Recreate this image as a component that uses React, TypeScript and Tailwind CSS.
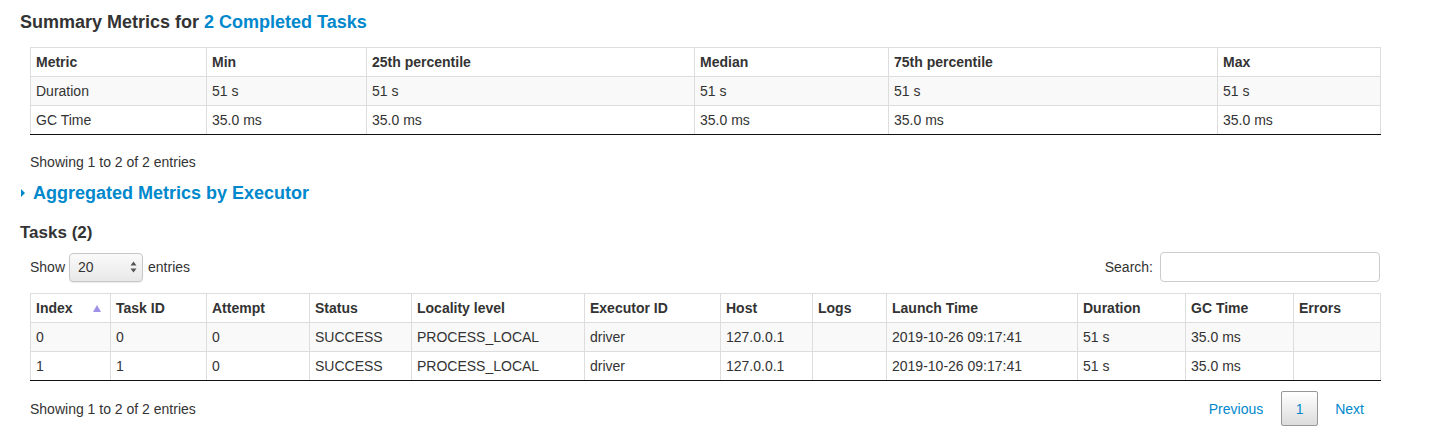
import React from 'react';

const summaryCols = [176, 160, 328, 194, 329, 163];
const summaryHead = ['Metric', 'Min', '25th percentile', 'Median', '75th percentile', 'Max'];
const summaryRows = [
  ['Duration', '51 s', '51 s', '51 s', '51 s', '51 s'],
  ['GC Time', '35.0 ms', '35.0 ms', '35.0 ms', '35.0 ms', '35.0 ms'],
];

const taskCols = [80, 96, 103, 102, 173, 136, 92, 74, 191, 108, 108, 87];
const taskHead = [
  'Index',
  'Task ID',
  'Attempt',
  'Status',
  'Locality level',
  'Executor ID',
  'Host',
  'Logs',
  'Launch Time',
  'Duration',
  'GC Time',
  'Errors',
];
const taskRows = [
  ['0', '0', '0', 'SUCCESS', 'PROCESS_LOCAL', 'driver', '127.0.0.1', '', '2019-10-26 09:17:41', '51 s', '35.0 ms', ''],
  ['1', '1', '0', 'SUCCESS', 'PROCESS_LOCAL', 'driver', '127.0.0.1', '', '2019-10-26 09:17:41', '51 s', '35.0 ms', ''],
];

function DataTable({ cols, head, rows, sortFirst }: { cols: number[]; head: string[]; rows: string[][]; sortFirst?: boolean }) {
  return (
    <table className="w-[1350px] table-fixed border-collapse text-[14px] leading-[20px] text-[#333]">
      <colgroup>
        {cols.map((w, i) => (
          <col key={i} style={{ width: w }} />
        ))}
      </colgroup>
      <thead>
        <tr className="bg-white">
          {head.map((h, i) => (
            <th key={h} className="relative border border-[#ddd] px-[5px] py-[4px] text-left font-bold">
              {h}
              {sortFirst && i === 0 && (
                <svg className="absolute right-[9px] top-[11px]" width="8" height="7" viewBox="0 0 8 7">
                  <path d="M4 0L8 7H0Z" fill="#9e92e6" />
                </svg>
              )}
            </th>
          ))}
        </tr>
      </thead>
      <tbody>
        {rows.map((r, ri) => (
          <tr key={ri} className={ri % 2 === 0 ? 'bg-[#f9f9f9]' : 'bg-white'}>
            {r.map((c, ci) => (
              <td
                key={ci}
                className={`border border-[#ddd] px-[5px] py-[4px] ${ri === rows.length - 1 ? 'border-b-[#111]' : ''}`}
              >
                {c}
              </td>
            ))}
          </tr>
        ))}
      </tbody>
    </table>
  );
}

export default function App() {
  return (
    <div className="min-h-[441px] w-[1429px] bg-white pl-[20px] font-['Liberation_Sans',Helvetica,Arial,sans-serif] text-[#333]">
      <h4 className="pt-[12px] text-[18px] font-bold leading-[20px]">
        Summary Metrics for <a className="text-[#0088cc]">2 Completed Tasks</a>
      </h4>
      <div className="ml-[10px] mt-[15px]">
        <DataTable cols={summaryCols} head={summaryHead} rows={summaryRows} />
        <div className="mt-[17px] text-[14px] leading-[20px]">Showing 1 to 2 of 2 entries</div>
      </div>

      <div className="mt-[11px] flex items-center text-[18px] font-bold leading-[20px] text-[#0088cc]">
        <svg className="ml-[1px] mr-[8px]" width="4" height="8" viewBox="0 0 4 8">
          <path d="M0 0L4 4L0 8Z" fill="#0088cc" />
        </svg>
        <span>Aggregated Metrics by Executor</span>
      </div>

      <h4 className="mt-[20px] text-[17px] font-bold leading-[20px]">Tasks (2)</h4>

      <div className="ml-[10px]">
        <div className="mt-[9px] flex w-[1350px] items-center justify-between text-[14px]">
          <div className="flex items-center">
            <span>Show</span>
            <div className="ml-[4px] mr-[5px] flex h-[29px] w-[74px] items-center justify-between rounded-[4px] border border-[#c8c8c8] bg-gradient-to-b from-[#fafafa] to-[#e8e8e8] pl-[8px] pr-[5px] shadow-[0_1px_1px_rgba(0,0,0,0.08)]">
              <span>20</span>
              <svg width="7" height="12" viewBox="0 0 7 12">
                <path d="M3.5 0.5L6.5 4.5H0.5Z" fill="#555" />
                <path d="M3.5 11.5L6.5 7.5H0.5Z" fill="#555" />
              </svg>
            </div>
            <span>entries</span>
          </div>
          <div className="flex items-center">
            <span className="mr-[7px]">Search:</span>
            <div className="h-[30px] w-[220px] rounded-[4px] border border-[#ccc] bg-white" />
          </div>
        </div>

        <div className="mt-[11px]">
          <DataTable cols={taskCols} head={taskHead} rows={taskRows} sortFirst />
        </div>

        <div className="mt-[10px] flex w-[1350px] items-center justify-between text-[14px] leading-[20px]">
          <span>Showing 1 to 2 of 2 entries</span>
          <div className="flex items-center">
            <span className="pl-[14px] pr-[18px] text-[#0088cc]">Previous</span>
            <span className="flex h-[35px] w-[37px] items-center justify-center rounded-[2px] border border-[#979797] bg-gradient-to-b from-[#fff] to-[#dcdcdc] text-[#0088cc]">
              1
            </span>
            <span className="pl-[17px] pr-[16px] text-[#0088cc]">Next</span>
          </div>
        </div>
      </div>
    </div>
  );
}
